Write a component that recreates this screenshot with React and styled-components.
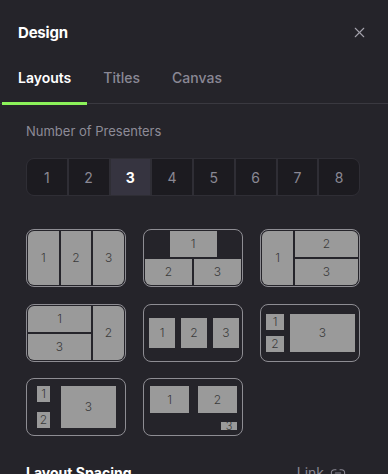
import styled, { createGlobalStyle } from "styled-components";
import { X, Link2 } from "lucide-react";

const GlobalStyle = createGlobalStyle`
  body {
    margin: 0;
    background: #25242a;
    font-family: "Inter", "Noto Sans", sans-serif;
  }
`;

const Panel = styled.div`
  width: 388px;
  height: 474px;
  overflow: hidden;
  background: #25242a;
  color: #fff;
`;

const Header = styled.div`
  height: 64px;
  display: flex;
  align-items: center;
  justify-content: space-between;
  padding: 0 20px 0 18px;
`;

const Title = styled.h2`
  margin: 0;
  font-size: 15px;
  font-weight: 700;
  letter-spacing: -0.2px;
`;

const CloseButton = styled.button`
  background: none;
  border: 0;
  padding: 0;
  color: #a4a2ac;
  display: flex;
  cursor: pointer;
`;

const TabBar = styled.div`
  display: flex;
  height: 40px;
  padding-left: 2px;
  border-bottom: 1px solid #3a3940;
  box-sizing: border-box;
`;

const Tab = styled.div`
  padding: 5px 16px 0;
  line-height: 18px;
  font-size: 14px;
  font-weight: ${(p) => (p.$active ? 600 : 500)};
  color: ${(p) => (p.$active ? "#ffffff" : "#8a8895")};
  border-bottom: 3px solid ${(p) => (p.$active ? "#8cf25a" : "transparent")};
  margin-bottom: -2px;
`;

const Content = styled.div`
  padding: 18px 28px 0 26px;
`;

const Label = styled.div`
  font-size: 13px;
  line-height: 18px;
  color: #8d8b97;
`;

const Segmented = styled.div`
  margin-top: 18px;
  display: grid;
  grid-template-columns: repeat(8, 1fr);
  gap: 2px;
  height: 38px;
  background: #2f2e35;
  border: 1px solid #2f2e35;
  border-radius: 8px;
  overflow: hidden;
  box-sizing: border-box;
`;

const Segment = styled.div`
  display: flex;
  align-items: center;
  justify-content: center;
  font-size: 14px;
  background: ${(p) => (p.$active ? "#363440" : "#1c1b20")};
  color: ${(p) => (p.$active ? "#ffffff" : "#8a8894")};
  font-weight: ${(p) => (p.$active ? 700 : 400)};
`;

const Layouts = styled.div`
  margin-top: 33px;
  display: grid;
  grid-template-columns: repeat(3, 100px);
  grid-auto-rows: 58px;
  gap: 16.5px 17px;
`;

const Card = styled.div`
  box-sizing: border-box;
  border: 1px solid #8e8d93;
  border-radius: 8px;
  padding: ${(p) => p.$pad || "1px"};
  display: grid;
  grid-template-columns: ${(p) => p.$cols || "1fr"};
  grid-template-rows: ${(p) => p.$rows || "1fr"};
  grid-template-areas: ${(p) => p.$areas || "none"};
  gap: ${(p) => p.$gap || "2px"};
  overflow: hidden;
`;

const Box = styled.div`
  grid-area: ${(p) => p.$area || "auto"};
  justify-self: ${(p) => p.$justify || "stretch"};
  width: ${(p) => p.$w || "auto"};
  background: #9a9a9a;
  color: #3a3a3a;
  font-size: ${(p) => p.$fs || "12px"};
  font-weight: 300;
  line-height: 1;
  display: flex;
  align-items: center;
  justify-content: center;
  overflow: hidden;
  border-radius: ${(p) => p.$r || "0"};
`;

const Footer = styled.div`
  margin-top: 28px;
  display: flex;
  justify-content: space-between;
  align-items: center;
  padding-right: 14px;
`;

const SectionTitle = styled.div`
  font-size: 14px;
  font-weight: 700;
  color: #fff;
`;

const LinkToggle = styled.div`
  display: flex;
  align-items: center;
  gap: 6px;
  font-size: 14px;
  color: #8a8894;
`;

export default function App() {
  const counts = [1, 2, 3, 4, 5, 6, 7, 8];

  return (
    <Panel>
      <GlobalStyle />
      <Header>
        <Title>Design</Title>
        <CloseButton>
          <X size={17} strokeWidth={1.5} />
        </CloseButton>
      </Header>
      <TabBar>
        <Tab $active>Layouts</Tab>
        <Tab>Titles</Tab>
        <Tab>Canvas</Tab>
      </TabBar>
      <Content>
        <Label>Number of Presenters</Label>
        <Segmented>
          {counts.map((n) => (
            <Segment key={n} $active={n === 3}>
              {n}
            </Segment>
          ))}
        </Segmented>

        <Layouts>
          <Card $cols="1fr 1fr 1fr">
            <Box $r="6px 0 0 6px">1</Box>
            <Box>2</Box>
            <Box $r="0 6px 6px 0">3</Box>
          </Card>

          <Card $cols="1fr 1fr" $rows="1fr 1fr" $areas={`"a a" "b c"`}>
            <Box $area="a" $justify="center" $w="47px">1</Box>
            <Box $area="b" $r="0 0 0 6px">2</Box>
            <Box $area="c" $r="0 0 6px 0">3</Box>
          </Card>

          <Card $cols="31px 1fr" $rows="1fr 1fr" $areas={`"a b" "a c"`}>
            <Box $area="a" $r="6px 0 0 6px">1</Box>
            <Box $area="b" $r="0 6px 0 0">2</Box>
            <Box $area="c" $r="0 0 6px 0">3</Box>
          </Card>

          <Card $cols="1fr 31px" $rows="1fr 1fr" $areas={`"a b" "c b"`}>
            <Box $area="a" $r="6px 0 0 0">1</Box>
            <Box $area="b" $r="0 6px 6px 0">2</Box>
            <Box $area="c" $r="0 0 0 6px">3</Box>
          </Card>

          <Card $pad="13px 4px 13px 5px" $cols="26px 26px 26px" $gap="6px">
            <Box>1</Box>
            <Box>2</Box>
            <Box>3</Box>
          </Card>

          <Card
            $pad="9px 4px 9px 5px"
            $cols="18px 1fr"
            $rows="16px 16px"
            $areas={`"a c" "b c"`}
            $gap="6px"
          >
            <Box $area="a">1</Box>
            <Box $area="b">2</Box>
            <Box $area="c">3</Box>
          </Card>

          <Card
            $pad="7px 9px 7px 10px"
            $cols="13px 55px"
            $rows="16px 16px"
            $areas={`"a c" "b c"`}
            $gap="10px 11px"
          >
            <Box $area="a">1</Box>
            <Box $area="b">2</Box>
            <Box $area="c">3</Box>
          </Card>

          <Card
            $pad="7px 5px 5px 6px"
            $cols="39px 39px"
            $rows="27px 8px"
            $areas={`"a b" ". c"`}
            $gap="9px"
          >
            <Box $area="a">1</Box>
            <Box $area="b">2</Box>
            <Box $area="c" $justify="end" $w="16px" $fs="11px">
              3
            </Box>
          </Card>
        </Layouts>

        <Footer>
          <SectionTitle>Layout Spacing</SectionTitle>
          <LinkToggle>
            Link
            <Link2 size={16} strokeWidth={1.6} />
          </LinkToggle>
        </Footer>
      </Content>
    </Panel>
  );
}
